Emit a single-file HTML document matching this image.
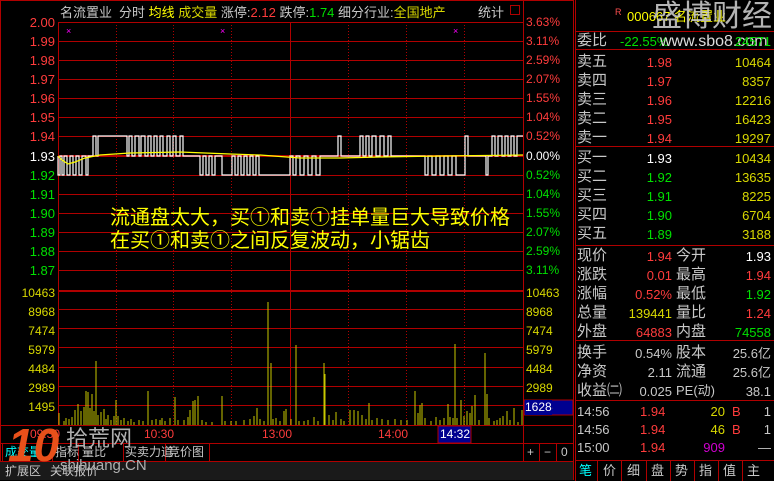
<!DOCTYPE html>
<html><head><meta charset="utf-8"><style>
*{margin:0;padding:0;box-sizing:border-box}
body{width:774px;height:481px;background:#000;position:relative;overflow:hidden;font-family:"Liberation Sans","Noto Sans CJK SC",sans-serif;font-size:13px}
.t{position:absolute;white-space:nowrap;line-height:15px}
.r{text-align:right}
.red{color:#ff3c3c}.grn{color:#00e000}.wht{color:#fff}.yel{color:#d8d800}.gry{color:#c8c8c8}
.lbl{color:#c8c8c8;font-size:15px}
</style></head><body>
<svg width="774" height="481" style="position:absolute;left:0;top:0">
<g stroke="#b00000" stroke-width="1" fill="none">
<rect x="0.5" y="0.5" width="573" height="479"/>
<line x1="58" y1="22.5" x2="523" y2="22.5"/>
<line x1="58" y1="41.5" x2="523" y2="41.5"/><line x1="58" y1="60.5" x2="523" y2="60.5"/><line x1="58" y1="79.5" x2="523" y2="79.5"/><line x1="58" y1="98.5" x2="523" y2="98.5"/><line x1="58" y1="117.5" x2="523" y2="117.5"/><line x1="58" y1="136.5" x2="523" y2="136.5"/><line x1="58" y1="175.5" x2="523" y2="175.5"/><line x1="58" y1="194.5" x2="523" y2="194.5"/><line x1="58" y1="213.5" x2="523" y2="213.5"/><line x1="58" y1="232.5" x2="523" y2="232.5"/><line x1="58" y1="251.5" x2="523" y2="251.5"/><line x1="58" y1="270.5" x2="523" y2="270.5"/>
<line x1="58" y1="309.5" x2="523" y2="309.5"/><line x1="58" y1="328.5" x2="523" y2="328.5"/><line x1="58" y1="347.5" x2="523" y2="347.5"/><line x1="58" y1="367.5" x2="523" y2="367.5"/><line x1="58" y1="386.5" x2="523" y2="386.5"/><line x1="58" y1="405.5" x2="523" y2="405.5"/>
<line x1="0" y1="425.5" x2="573" y2="425.5"/><line x1="0" y1="443.5" x2="573" y2="443.5"/><line x1="0" y1="461.5" x2="573" y2="461.5"/>
<line x1="58.5" y1="22" x2="58.5" y2="425"/><line x1="523.5" y1="0" x2="523.5" y2="480"/><line x1="290.5" y1="22" x2="290.5" y2="425"/>
<g stroke-dasharray="1,2"><line x1="116.5" y1="22" x2="116.5" y2="425"/><line x1="173.5" y1="22" x2="173.5" y2="425"/><line x1="231.5" y1="22" x2="231.5" y2="425"/><line x1="348.5" y1="22" x2="348.5" y2="425"/><line x1="406.5" y1="22" x2="406.5" y2="425"/><line x1="464.5" y1="22" x2="464.5" y2="425"/></g>
<line x1="58" y1="156" x2="523" y2="156" stroke-width="2"/>
<line x1="58" y1="291" x2="523" y2="291" stroke-width="2"/>
<line x1="2.5" y1="443" x2="2.5" y2="480"/>
<line x1="46.5" y1="461" x2="46.5" y2="480"/><line x1="103.5" y1="461" x2="103.5" y2="480"/>
<line x1="52.5" y1="443" x2="52.5" y2="461"/><line x1="78.5" y1="443" x2="78.5" y2="461"/><line x1="123.5" y1="443" x2="123.5" y2="461"/><line x1="165.5" y1="443" x2="165.5" y2="461"/><line x1="209.5" y1="443" x2="209.5" y2="461"/>
<line x1="539.5" y1="443" x2="539.5" y2="461"/><line x1="556.5" y1="443" x2="556.5" y2="461"/>
<line x1="575.5" y1="0" x2="575.5" y2="481"/>
<line x1="575" y1="31.5" x2="774" y2="31.5"/><line x1="575" y1="49.5" x2="774" y2="49.5"/><line x1="575" y1="146.5" x2="774" y2="146.5"/><line x1="575" y1="245.5" x2="774" y2="245.5"/><line x1="575" y1="340.5" x2="774" y2="340.5"/><line x1="575" y1="400.5" x2="774" y2="400.5"/><line x1="575" y1="460.5" x2="774" y2="460.5"/>
<line x1="597.5" y1="460" x2="597.5" y2="481"/><line x1="621.5" y1="460" x2="621.5" y2="481"/><line x1="646.5" y1="460" x2="646.5" y2="481"/><line x1="670.5" y1="460" x2="670.5" y2="481"/><line x1="694.5" y1="460" x2="694.5" y2="481"/><line x1="718.5" y1="460" x2="718.5" y2="481"/><line x1="742.5" y1="460" x2="742.5" y2="481"/>
<rect x="510.5" y="5.5" width="9" height="9"/>
</g>
<rect x="0" y="462" width="573" height="18" fill="#1a1a1a"/>
<rect x="438" y="426" width="33" height="17" fill="#000090" stroke="#b00000"/>
<rect x="524" y="400" width="49" height="15" fill="#000090" stroke="#b00000"/>
<path fill="none" stroke="#fff" stroke-width="1.2" d="M58,156 V175 H60 V156 H62 V175 H64 V156 H67 V175 H70 V156 H73 V175 H76 V156 H79 V175 H82 V156 H86 V175 H88 V156 H93 V136 H96 V156 H98 V136 H116 H127 V156 H129 V136 H132 V156 H135 V136 H139 V156 H141 V136 H145 V156 H148 V136 H151 V156 H154 V136 H157 V156 H160 V136 H163 V156 H167 V136 H170 V156 H173 V136 H176 V156 H180 V136 H183 V156 H200 V175 H203 V156 H206 V175 H209 V156 H212 V175 H215 V156 H222 V175 H232 V156 H235 V175 H238 V156 H241 V175 H244 V156 H247 V175 H250 V156 H253 V175 H256 V156 H259 V175 H290 V156 H293 V175 H296 V156 H300 V175 H304 V156 H308 V175 H312 V156 H316 V175 H320 V156 H338 V136 H341 V156 H360 V136 H363 V156 H366 V136 H369 V156 H372 V136 H376 V156 H380 V136 H384 V156 H388 V136 H391 V156 H425 V175 H428 V156 H432 V175 H436 V156 H440 V175 H444 V156 H448 V175 H452 V156 H456 V175 H465 V136 H468 V156 H486 V175 H488 V156 H492 V136 H495 V156 H498 V136 H502 V156 H505 V136 H508 V156 H511 V136 H514 V156 H517 V136 H523"/>
<path fill="none" stroke="#ffff00" stroke-width="1.2" d="M58,156 L62,160 L68,164 L75,162 L85,158 L100,155 L130,153 L180,152 L230,154 L260,155 L300,158 L340,158 L380,157 L440,156 L523,155"/>
<g fill="#ff00ff" font-size="9"><text x="66" y="34">×</text><text x="220" y="34">×</text><text x="453" y="34">×</text></g>
<path stroke="#c8c800" stroke-width="1" d="M59,425V413M64,425V421M66,425V418M69,425V419M72,425V417M75,425V410M78,425V404M81,425V411M84,425V407M86,425V391M88,425V392M90,425V408M92,425V394M94,425V411M96,425V361M98,425V415M101,425V412M104,425V409M106,425V419M108,425V415M111,425V420M114,425V416M116,425V400M118,425V416M121,425V420M124,425V418M128,425V421M131,425V419M134,425V422M139,425V420M143,425V421M148,425V391M152,425V420M156,425V419M160,425V420M162,425V418M165,425V421M170,425V418M175,425V397M178,425V420M184,425V420M188,425V417M190,425V410M193,425V401M195,425V400M198,425V396M202,425V420M206,425V422M212,425V422M222,425V396M225,425V421M231,425V421M236,425V421M244,425V420M250,425V419M254,425V416M257,425V408M260,425V419M264,425V421M268,425V302M271,425V363M273,425V419M276,425V418M280,425V421M284,425V411M286,425V409M291,425V419M296,425V345M299,425V421M304,425V421M308,425V420M314,425V417M318,425V421M324,425V363M325,425V374M329,425V415M333,425V420M336,425V412M341,425V419M344,425V421M350,425V410M354,425V410M358,425V411M362,425V415M366,425V419M369,425V403M372,425V420M377,425V418M382,425V419M388,425V420M395,425V419M401,425V420M407,425V420M415,425V391M418,425V413M420,425V405M422,425V403M425,425V418M431,425V421M436,425V417M440,425V420M444,425V418M448,425V404M450,425V417M453,425V418M455,425V344M457,425V418M461,425V400M464,425V416M467,425V411M470,425V413M472,425V406M475,425V395M479,425V420M485,425V353M487,425V394M489,425V418M494,425V421M497,425V420M500,425V418M503,425V416M507,425V411M510,425V420M514,425V408M518,425V422M522,425V410"/>
</svg>

<div class="t gry" style="left:60px;top:5px;font-size:13px">名流置业</div>
<div class="t" style="left:119px;top:5px;font-size:13px"><span class="gry">分时</span> <span style="color:#ffff00">均线</span> <span class="yel">成交量</span> <span class="gry">涨停:</span><span class="red">2.12</span> <span class="gry">跌停:</span><span class="grn">1.74</span> <span class="gry">细分行业:</span><span class="yel">全国地产</span></div>
<div class="t gry" style="left:478px;top:5px">统计</div>

<div class="t r" style="left:0;width:55px;top:15px;line-height:15px;font-size:13px">
<div class="red">2.00</div><div class="red" style="margin-top:4px">1.99</div><div class="red" style="margin-top:4px">1.98</div><div class="red" style="margin-top:4px">1.97</div><div class="red" style="margin-top:4px">1.96</div><div class="red" style="margin-top:4px">1.95</div><div class="red" style="margin-top:4px">1.94</div><div class="wht" style="margin-top:5px">1.93</div><div class="grn" style="margin-top:4px">1.92</div><div class="grn" style="margin-top:4px">1.91</div><div class="grn" style="margin-top:4px">1.90</div><div class="grn" style="margin-top:4px">1.89</div><div class="grn" style="margin-top:4px">1.88</div><div class="grn" style="margin-top:4px">1.87</div></div>
<div class="t" style="left:526px;top:15px;line-height:15px;font-size:12px">
<div class="red">3.63%</div><div class="red" style="margin-top:4px">3.11%</div><div class="red" style="margin-top:4px">2.59%</div><div class="red" style="margin-top:4px">2.07%</div><div class="red" style="margin-top:4px">1.55%</div><div class="red" style="margin-top:4px">1.04%</div><div class="red" style="margin-top:4px">0.52%</div><div class="wht" style="margin-top:5px">0.00%</div><div class="grn" style="margin-top:4px">0.52%</div><div class="grn" style="margin-top:4px">1.04%</div><div class="grn" style="margin-top:4px">1.55%</div><div class="grn" style="margin-top:4px">2.07%</div><div class="grn" style="margin-top:4px">2.59%</div><div class="grn" style="margin-top:4px">3.11%</div></div>
<div class="t r yel" style="left:0;width:55px;top:284px;font-size:12px;line-height:19px">10463<br>8968<br>7474<br>5979<br>4484<br>2989<br>1495</div>
<div class="t yel" style="left:526px;top:284px;font-size:12px;line-height:19px">10463<br>8968<br>7474<br>5979<br>4484<br>2989<br>1495</div>
<div class="t wht" style="left:525px;top:400px;font-size:12px;background:#000090">1628</div>

<div class="t" style="left:110px;top:207px;font-size:20px;line-height:23px;color:#ffff00">流通盘太大，买①和卖①挂单量巨大导致价格<br>在买①和卖①之间反复波动，小锯齿</div>

<div class="t red" style="left:30px;top:427px;font-size:12px">09:30</div>
<div class="t red" style="left:144px;top:427px;font-size:12px">10:30</div>
<div class="t red" style="left:262px;top:427px;font-size:12px">13:00</div>
<div class="t red" style="left:378px;top:427px;font-size:12px">14:00</div>
<div class="t wht" style="left:440px;top:427px;font-size:12px">14:32</div>
<div class="t" style="left:5px;top:445px;font-size:12px"><span style="color:#0ff">成交量</span></div>
<div class="t gry" style="left:55px;top:445px;font-size:12px">指标</div>
<div class="t gry" style="left:82px;top:445px;font-size:12px">量比</div>
<div class="t gry" style="left:125px;top:445px;font-size:12px">买卖力道</div>
<div class="t gry" style="left:168px;top:445px;font-size:12px">竞价图</div>
<div class="t gry" style="left:527px;top:445px;font-size:12px">+ &nbsp; − &nbsp;&nbsp;0</div>
<div class="t gry" style="left:5px;top:464px;font-size:12px">扩展区</div>
<div class="t gry" style="left:50px;top:464px;font-size:12px">关联报价</div>
<div class="t" style="left:8px;top:420px;font-size:46px;font-weight:bold;color:#e8501a;line-height:50px;font-style:italic">10</div>
<div class="t" style="left:66px;top:427px;font-size:22px;color:#b0b0b0;line-height:24px">拾荒网</div>
<div class="t" style="left:60px;top:458px;font-size:15px;color:#b0b0b0">shihuang.CN</div>

<div class="t" style="left:615px;top:5px;font-size:9px;color:#ff5050">R</div>
<div class="t" style="left:627px;top:9px;font-size:13px;color:#ffff00">000667 名流置业</div>
<div class="t" style="left:652px;top:0px;font-size:30px;color:#c8c8c8;line-height:34px;opacity:.9">盛博财经</div>
<div class="t lbl" style="left:577px;top:33px">委比</div>
<div class="t grn" style="left:620px;top:34px">-22.55%</div>
<div class="t" style="left:660px;top:34px;font-size:16px;color:#ddd">www.sbo8.com</div>
<div class="t grn r" style="left:700px;width:71px;top:34px">24571</div>

<div class="t lbl" style="left:577px;top:52px;line-height:19px">卖五<br>卖四<br>卖三<br>卖二<br>卖一</div>
<div class="t red r" style="left:620px;width:52px;top:53px;line-height:19px;font-size:13px">1.98<br>1.97<br>1.96<br>1.95<br>1.94</div>
<div class="t yel r" style="left:700px;width:71px;top:53px;line-height:19px;font-size:13px">10464<br>8357<br>12216<br>16423<br>19297</div>
<div class="t lbl" style="left:577px;top:148px;line-height:19px">买一<br>买二<br>买三<br>买四<br>买五</div>
<div class="t r" style="left:620px;width:52px;top:149px;line-height:19px;font-size:13px"><span class="wht">1.93</span><br><span class="grn">1.92<br>1.91<br>1.90<br>1.89</span></div>
<div class="t yel r" style="left:700px;width:71px;top:149px;line-height:19px;font-size:13px">10434<br>13635<br>8225<br>6704<br>3188</div>

<div class="t lbl" style="left:577px;top:246px;line-height:19px">现价<br>涨跌<br>涨幅<br>总量<br>外盘</div>
<div class="t r" style="left:610px;width:62px;top:247px;line-height:19px;font-size:13px"><span class="red">1.94<br>0.01<br>0.52%</span><br><span class="yel">139441</span><br><span class="red">64883</span></div>
<div class="t lbl" style="left:676px;top:246px;line-height:19px">今开<br>最高<br>最低<br>量比<br>内盘</div>
<div class="t r" style="left:710px;width:61px;top:247px;line-height:19px;font-size:13px"><span class="wht">1.93</span><br><span class="red">1.94</span><br><span class="grn">1.92</span><br><span class="red">1.24</span><br><span class="grn">74558</span></div>
<div class="t lbl" style="left:577px;top:343px;line-height:19px">换手<br>净资<br>收益㈡</div>
<div class="t gry r" style="left:610px;width:62px;top:344px;line-height:19px;font-size:13px">0.54%<br>2.11<br>0.025</div>
<div class="t lbl" style="left:676px;top:343px;line-height:19px">股本<br>流通<br><span style="font-size:13px">PE(动)</span></div>
<div class="t gry r" style="left:710px;width:61px;top:344px;line-height:19px;font-size:13px">25.6亿<br>25.6亿<br>38.1</div>

<div class="t gry" style="left:577px;top:403px;line-height:18px;font-size:13px">14:56<br>14:56<br>15:00</div>
<div class="t red" style="left:640px;top:403px;line-height:18px;font-size:13px">1.94<br>1.94<br>1.94</div>
<div class="t r" style="left:680px;width:45px;top:403px;line-height:18px;font-size:13px"><span class="yel">20</span><br><span class="yel">46</span><br><span style="color:#d000d0">909</span></div>
<div class="t red" style="left:732px;top:403px;line-height:18px;font-size:13px">B<br>B</div>
<div class="t gry r" style="left:750px;width:21px;top:403px;line-height:18px;font-size:13px">1<br>1<br>—</div>
<div class="t" style="left:579px;top:463px;font-size:13px"><span style="color:#0ff">笔</span></div>
<div class="t gry" style="left:603px;top:463px;font-size:13px;letter-spacing:11px">价细盘势指值主</div>
</body></html>
